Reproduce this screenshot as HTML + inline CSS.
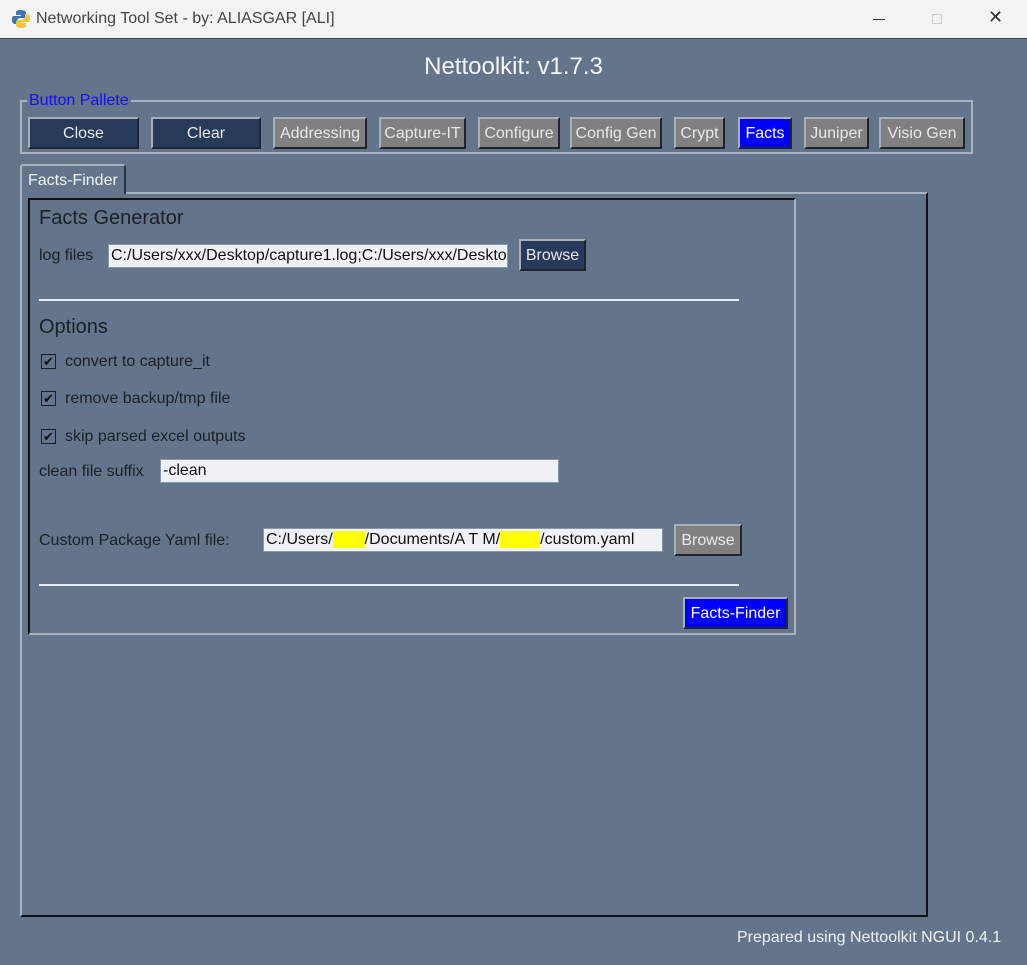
<!DOCTYPE html>
<html><head><style>
*{margin:0;padding:0;box-sizing:border-box}
body{width:1027px;height:965px;background:#64758b;font-family:"Liberation Sans",sans-serif;position:relative;overflow:hidden}
.a{position:absolute}
.tb{left:0;top:0;width:1027px;height:39px;background:#f3f3f3;border-bottom:1px solid #3a4350}
.btn{position:absolute;top:117px;height:32px;font-size:16px;color:#e8e8e8;display:flex;align-items:center;justify-content:center;padding-top:2px;border:2px solid;border-color:#a8b0bc #1e2530 #1e2530 #a8b0bc}
.n{background:#283a5a}
.g{background:#808080}
.t{font-size:16px;color:#1b1f26}
.inp{position:absolute;background:#eef1f6;border:1px solid #8a97a8;font-size:16px;color:#111;padding-left:2px;line-height:22px;height:24px;white-space:nowrap;overflow:hidden}
.cb{position:absolute;left:41px;width:15px;height:15px;border:1px solid #1b1f26;font-size:13px;line-height:13px;text-align:center;color:#111}
.hl{position:absolute;background:#e8ecf2;height:2px}
</style></head><body>
<div class="a tb"></div>
<svg class="a" style="left:11px;top:9px" width="20" height="20" viewBox="0 0 20 20"><path d="M9 1c-4 0-4 2-4 3v2h5v1H3C1 7 1 9 1 11s1 4 3 4h2v-3c0-2 2-3 3-3h4c1 0 2-1 2-2V4c0-2-2-3-6-3z" fill="#3a75b0"/><path d="M11 19c4 0 4-2 4-3v-2h-5v-1h7c2 0 2-2 2-4s-1-4-3-4h-2v3c0 2-2 3-3 3H7c-1 0-2 1-2 2v3c0 2 2 3 6 3z" fill="#f2c53d"/></svg>
<div class="a" style="left:36px;top:10px;font-size:16px;color:#444">Networking Tool Set - by: ALIASGAR [ALI]</div>
<div class="a" style="left:873px;top:19px;width:12px;height:1px;background:#333"></div>
<div class="a" style="left:932px;top:14px;width:10px;height:10px;border:1px solid #ccc"></div>
<div class="a" style="left:988px;top:7px;font-size:18px;color:#333">✕</div>
<div class="a" style="left:0;top:40px;width:1027px;text-align:center;font-size:24px;color:#f4f6f8;line-height:54px">Nettoolkit: v1.7.3</div>
<div class="a" style="left:20px;top:100px;width:953px;height:54px;border:2px solid #a8b2c0"></div>
<div class="a" style="left:27px;top:92px;background:#64758b;padding:0 2px;font-size:16px;color:#1010f0">Button Pallete</div>
<div class="btn n" style="left:28px;width:111px">Close</div>
<div class="btn n" style="left:151px;width:110px">Clear</div>
<div class="btn g" style="left:273px;width:94px">Addressing</div>
<div class="btn g" style="left:379px;width:87px">Capture-IT</div>
<div class="btn g" style="left:478px;width:82px">Configure</div>
<div class="btn g" style="left:570px;width:92px">Config Gen</div>
<div class="btn g" style="left:674px;width:51px">Crypt</div>
<div class="btn" style="left:738px;width:54px;background:#0000ff;color:#fff">Facts</div>
<div class="btn g" style="left:804px;width:65px">Juniper</div>
<div class="btn g" style="left:879px;width:86px">Visio Gen</div>
<div class="a" style="left:20px;top:192px;width:908px;height:725px;border:2px solid;border-color:#a8b2c0 #111 #111 #a8b2c0"></div>
<div class="a" style="left:20px;top:164px;width:106px;height:30px;border:2px solid;border-bottom:none;border-color:#a8b2c0 #2a3340 #64758b #a8b2c0;background:#64758b;border-radius:3px 3px 0 0;font-size:16px;color:#f0f2f5;padding:6px 0 0 6px">Facts-Finder</div>
<div class="a" style="left:28px;top:198px;width:768px;height:437px;border:2px solid;border-color:#111 #a8b2c0 #a8b2c0 #111"></div>
<div class="a" style="left:39px;top:207px;font-size:20px;color:#1b1f26">Facts Generator</div>
<div class="a t" style="left:39px;top:247px">log files</div>
<div class="inp" style="left:108px;top:244px;width:400px">C:/Users/xxx/Desktop/capture1.log;C:/Users/xxx/Desktop/capture2.log</div>
<div class="btn n" style="left:519px;top:239px;width:67px;height:32px">Browse</div>
<div class="hl" style="left:39px;top:299px;width:700px"></div>
<div class="a" style="left:39px;top:316px;font-size:20px;color:#1b1f26">Options</div>
<div class="cb" style="top:354px">✔</div><div class="a t" style="left:65px;top:353px">convert to capture_it</div>
<div class="cb" style="top:391px">✔</div><div class="a t" style="left:65px;top:390px">remove backup/tmp file</div>
<div class="cb" style="top:429px">✔</div><div class="a t" style="left:65px;top:428px">skip parsed excel outputs</div>
<div class="a t" style="left:39px;top:463px">clean file suffix</div>
<div class="inp" style="left:160px;top:459px;width:399px">-clean</div>
<div class="a t" style="left:39px;top:532px">Custom Package Yaml file:</div>
<div class="inp" style="left:263px;top:528px;width:400px">C:/Users/<span style="background:#ff0;color:#ff0">xxxx</span>/Documents/A T M/<span style="background:#ff0;color:#ff0">xxxxx</span>/custom.yaml</div>
<div class="btn g" style="left:674px;top:524px;width:68px;height:32px">Browse</div>
<div class="hl" style="left:39px;top:584px;width:700px"></div>
<div class="btn" style="left:683px;top:597px;width:105px;height:32px;background:#0000ff;color:#fff">Facts-Finder</div>
<div class="a" style="left:737px;top:929px;font-size:16px;color:#eef1f5">Prepared using Nettoolkit NGUI 0.4.1</div>
</body></html>
